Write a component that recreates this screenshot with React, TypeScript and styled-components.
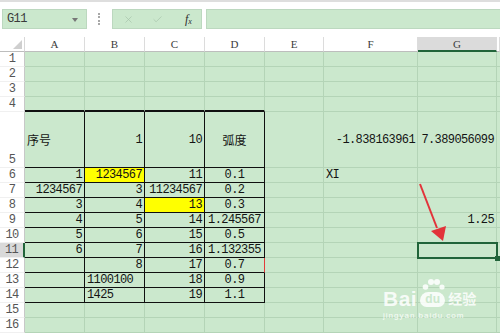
import React from 'react';
import styled, { createGlobalStyle } from 'styled-components';
import { X, Check } from 'lucide-react';

type Align = 'left' | 'center' | 'right';

interface CellData {
  v: string;
  align?: Align;
  fill?: boolean;
  cjk?: boolean;
}

const GREEN = '#cbe8cd';
const GRID = '#b4d4b7';
const DARK_GREEN = '#21643a';
const MARK = 'rgba(255, 255, 255, 0.85)';

const COL_WIDTHS = [60, 60, 60, 60, 59, 94, 79, 3];
const LETTERS = ['A', 'B', 'C', 'D', 'E', 'F', 'G', ''];

// sheet contents, column index 0 = A
const DATA: Record<number, Record<number, CellData>> = {
  5: {
    0: { v: '序号', align: 'left', cjk: true },
    1: { v: '1' },
    2: { v: '10' },
    3: { v: '弧度', align: 'center', cjk: true },
    5: { v: '-1.838163961' },
    6: { v: '7.389056099' },
  },
  6: { 0: { v: '1' }, 1: { v: '1234567', fill: true }, 2: { v: '11' }, 3: { v: '0.1', align: 'center' }, 5: { v: 'XI', align: 'left' } },
  7: { 0: { v: '1234567' }, 1: { v: '3' }, 2: { v: '11234567' }, 3: { v: '0.2', align: 'center' } },
  8: { 0: { v: '3' }, 1: { v: '4' }, 2: { v: '13', fill: true }, 3: { v: '0.3', align: 'center' } },
  9: { 0: { v: '4' }, 1: { v: '5' }, 2: { v: '14' }, 3: { v: '1.245567', align: 'center' }, 6: { v: '1.25' } },
  10: { 0: { v: '5' }, 1: { v: '6' }, 2: { v: '15' }, 3: { v: '0.5', align: 'center' } },
  11: { 0: { v: '6' }, 1: { v: '7' }, 2: { v: '16' }, 3: { v: '1.132355', align: 'center' } },
  12: { 1: { v: '8' }, 2: { v: '17' }, 3: { v: '0.7', align: 'center' } },
  13: { 1: { v: '1100100', align: 'left' }, 2: { v: '18' }, 3: { v: '0.9', align: 'center' } },
  14: { 1: { v: '1425', align: 'left' }, 2: { v: '19' }, 3: { v: '1.1', align: 'center' } },
};

const ROWS = Array.from({ length: 16 }, (_, i) => i + 1);

const GlobalStyle = createGlobalStyle`
  html, body { margin: 0; padding: 0; background: #fff; }
  * { box-sizing: border-box; }
`;

const Window = styled.div`
  position: relative;
  width: 500px;
  height: 333px;
  overflow: hidden;
  background: #fff;
  font-family: "Liberation Mono", monospace;
`;

const TopBar = styled.div`
  height: 37px;
  border-top: 2px solid #dedede;
  padding: 7px 0 0 2px;
  display: flex;
  align-items: flex-start;
`;

const NameBox = styled.div`
  position: relative;
  width: 85px;
  height: 20px;
  background: ${GREEN};
  border: 1px solid #bcd8bf;
  display: flex;
  align-items: center;
  padding-left: 4px;
  font-size: 12px;
  letter-spacing: -0.6px;
  color: #3a3a3a;

  &::after {
    content: '';
    position: absolute;
    right: 8px;
    top: 8px;
    border-left: 3px solid transparent;
    border-right: 3px solid transparent;
    border-top: 4px solid #777;
  }
`;

const Grip = styled.div`
  width: 0;
  height: 12px;
  margin: 4px 12px 0 11px;
  border-left: 2px dotted #a8a8a8;
`;

const FuncBox = styled.div`
  width: 90px;
  height: 20px;
  background: ${GREEN};
  border: 1px solid #bcd8bf;
  display: flex;
  align-items: center;
  padding-left: 10px;
  gap: 18px;
  color: #a9c6ac;
`;

const Fx = styled.span`
  margin-left: 4px;
  font-family: "Liberation Serif", serif;
  font-style: italic;
  font-size: 12px;
  color: #2d2d2d;

  sub {
    font-size: 8px;
    vertical-align: -1px;
  }
`;

const Formula = styled.div`
  flex: 1;
  height: 20px;
  margin-left: 4px;
  background: ${GREEN};
  border-top: 1px solid #bcd8bf;
  border-bottom: 1px solid #bcd8bf;
  border-left: 1px solid #bcd8bf;
`;

const Sheet = styled.div`
  display: grid;
  grid-template-columns: 25px ${COL_WIDTHS.map((w) => `${w}px`).join(' ')};
  grid-template-rows: 15px repeat(4, 15px) 56px repeat(11, 15px);
`;

const Corner = styled.div`
  border-bottom: 1px solid #bdbdbd;
  border-right: 1px solid #d8d8d8;
`;

const ColHead = styled.div<{ $active?: boolean }>`
  display: flex;
  align-items: center;
  justify-content: center;
  font-family: "Liberation Serif", serif;
  font-size: 11px;
  color: #3c3c3c;
  background: ${(p) => (p.$active ? '#dbdbdb' : '#fff')};
  border-right: 1px solid #dcdcdc;
  border-bottom: ${(p) => (p.$active ? `2px solid ${DARK_GREEN}` : '1px solid #bdbdbd')};
`;

const RowHead = styled.div<{ $active?: boolean }>`
  display: flex;
  align-items: flex-end;
  justify-content: center;
  padding-bottom: 1px;
  font-size: 12px;
  letter-spacing: -0.6px;
  line-height: 12px;
  color: #555;
  background: ${(p) => (p.$active ? '#d9d9d9' : '#fff')};
  border-right: ${(p) => (p.$active ? `2px solid ${DARK_GREEN}` : '1px solid #c8c8c8')};
  border-bottom: 1px solid #f0f0f0;
`;

const Cell = styled.div<{
  $align: Align;
  $fill?: boolean;
  $cjk?: boolean;
  $rb: string;
  $bb: string;
  $bw: number;
}>`
  display: flex;
  align-items: center;
  justify-content: ${(p) => (p.$align === 'left' ? 'flex-start' : p.$align === 'center' ? 'center' : 'flex-end')};
  padding: 0 2px;
  overflow: visible;
  white-space: nowrap;
  background: ${(p) => (p.$fill ? '#ffff00' : GREEN)};
  border-right: 1px solid ${(p) => p.$rb};
  border-bottom: ${(p) => p.$bw}px solid ${(p) => p.$bb};
  color: #141414;
  font-family: ${(p) => (p.$cjk ? '"Noto Sans CJK SC", sans-serif' : '"Liberation Mono", monospace')};
  font-size: 12px;
  letter-spacing: ${(p) => (p.$cjk ? '0' : '-0.6px')};
`;

const Selection = styled.div`
  position: absolute;
  left: 417px;
  top: 242px;
  width: 81px;
  height: 17px;
  border: 2px solid ${DARK_GREEN};
  pointer-events: none;

  &::after {
    content: '';
    position: absolute;
    right: -4px;
    bottom: -4px;
    width: 5px;
    height: 5px;
    background: ${DARK_GREEN};
  }
`;

const Overlay = styled.svg`
  position: absolute;
  left: 0;
  top: 0;
  pointer-events: none;
`;

const Watermark = styled.div`
  position: absolute;
  left: 383px;
  top: 276px;
  color: ${MARK};
  font-family: "Liberation Sans", sans-serif;
  pointer-events: none;
`;

const MarkLine = styled.div`
  display: flex;
  align-items: flex-end;
  height: 31px;
`;

const Bai = styled.span`
  font-size: 21px;
  font-weight: bold;
  line-height: 17px;
  letter-spacing: 0.5px;
`;

const Paw = styled.div`
  display: flex;
  flex-direction: column;
  align-items: center;
  width: 27px;
  margin-left: 2px;
`;

const Du = styled.span`
  width: 25px;
  height: 15px;
  margin-top: 1px;
  border-radius: 9px 9px 7px 7px;
  background: ${MARK};
  color: ${GREEN};
  font-size: 12px;
  font-weight: bold;
  line-height: 15px;
  text-align: center;
`;

const Jingyan = styled.span`
  font-family: "Noto Sans CJK SC", sans-serif;
  font-size: 14px;
  font-weight: bold;
  line-height: 17px;
  margin-left: 2px;
`;

const Url = styled.div`
  margin-top: 4px;
  font-size: 8px;
  letter-spacing: 1px;
  color: rgba(255, 255, 255, 0.9);
`;

function cellBorders(r: number, c: number) {
  const inRange = c <= 3 && r >= 5 && r <= 14;
  const rb = inRange ? (r === 12 && c === 3 ? '#e23b3b' : '#101010') : GRID;
  const topOfTable = r === 4 && c <= 3;
  const bb = inRange || topOfTable ? '#101010' : GRID;
  const bw = topOfTable ? 2 : 1;
  return { rb, bb, bw };
}

const App: React.FC = () => {
  return (
    <>
      <GlobalStyle />
      <Window>
        <TopBar>
          <NameBox>G11</NameBox>
          <Grip />
          <FuncBox>
            <X size={11} strokeWidth={1.6} />
            <Check size={11} strokeWidth={1.6} />
            <Fx>
              f<sub>x</sub>
            </Fx>
          </FuncBox>
          <Formula />
        </TopBar>

        <Sheet>
          <Corner>
            <svg width="24" height="14">
              <polygon points="22,3 22,12 13,12" fill="#cfcfcf" />
            </svg>
          </Corner>
          {LETTERS.map((l, i) => (
            <ColHead key={i} $active={l === 'G'}>
              {l}
            </ColHead>
          ))}

          {ROWS.map((r) => (
            <React.Fragment key={r}>
              <RowHead $active={r === 11}>{r}</RowHead>
              {COL_WIDTHS.map((_, c) => {
                const d = DATA[r]?.[c];
                const b = cellBorders(r, c);
                return (
                  <Cell
                    key={c}
                    $align={d?.align ?? 'right'}
                    $fill={d?.fill}
                    $cjk={d?.cjk}
                    $rb={b.rb}
                    $bb={b.bb}
                    $bw={b.bw}
                  >
                    {d?.v}
                  </Cell>
                );
              })}
            </React.Fragment>
          ))}
        </Sheet>

        <Selection />

        <Overlay width="500" height="333" viewBox="0 0 500 333">
          <line x1="420" y1="184" x2="437" y2="228" stroke="#e2333a" strokeWidth="2" />
          <polygon points="443,241 431,231 446,226" fill="#e2333a" />
        </Overlay>

        <Watermark>
          <MarkLine>
            <Bai>Bai</Bai>
            <Paw>
              <svg width="24" height="13" viewBox="0 0 24 13">
                <circle cx="4.5" cy="9" r="2.8" fill={MARK} />
                <circle cx="10" cy="4" r="3" fill={MARK} />
                <circle cx="16" cy="4" r="3" fill={MARK} />
                <circle cx="21" cy="9" r="2.6" fill={MARK} />
              </svg>
              <Du>du</Du>
            </Paw>
            <Jingyan>经验</Jingyan>
          </MarkLine>
          <Url>jingyan.baidu.com</Url>
        </Watermark>
      </Window>
    </>
  );
};

export default App;
